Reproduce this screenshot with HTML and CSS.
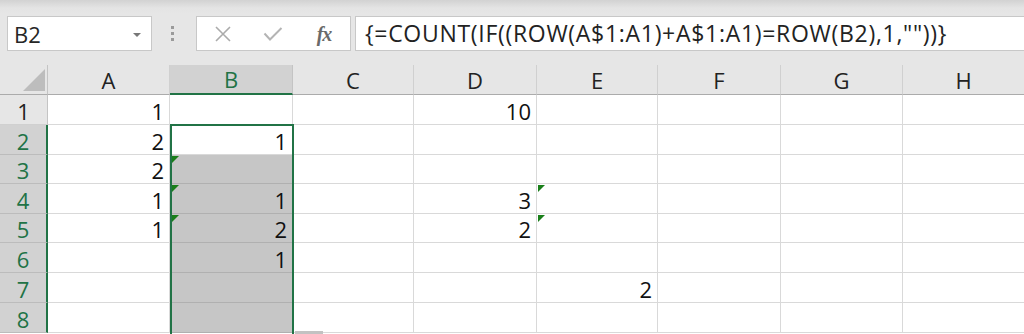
FILE: index.html
```html
<!DOCTYPE html>
<html>
<head>
<meta charset="utf-8">
<link rel="stylesheet" href="styles.css">
</head>
<body>
<div class="app">
  <div class="fbar">
    <div class="namebox"><span class="nb-text">B2</span><span class="nb-arrow"></span></div>
    <div class="grip"><i></i><i></i><i></i></div>
    <div class="tools">
      <span class="tool"><svg width="18" height="16" viewBox="0 0 18 16"><path d="M2 1 L16 15 M16 1 L2 15" stroke="#ababab" stroke-width="1.6" fill="none"/></svg></span>
      <span class="tool"><svg width="20" height="14" viewBox="0 0 20 14"><path d="M1.5 6.5 L7 12.5 L18.5 1" stroke="#b4b4b4" stroke-width="2" fill="none"/></svg></span>
      <span class="tool fx">fx</span>
    </div>
    <div class="finput">{=COUNT(IF((ROW(A$1:A1)+A$1:A1)=ROW(B2),1,""))}</div>
  </div>

  <div class="sheet">
    <div class="grid">
      <div class="corner"><span class="corner-tri"></span></div>
      <div class="ch">A</div>
      <div class="ch sel">B</div>
      <div class="ch">C</div>
      <div class="ch">D</div>
      <div class="ch">E</div>
      <div class="ch">F</div>
      <div class="ch">G</div>
      <div class="ch">H</div>

      <div class="rh">1</div>
      <div class="c">1</div><div class="c"></div><div class="c"></div><div class="c">10</div><div class="c"></div><div class="c"></div><div class="c"></div><div class="c"></div>

      <div class="rh sel">2</div>
      <div class="c">2</div><div class="c active">1</div><div class="c"></div><div class="c"></div><div class="c"></div><div class="c"></div><div class="c"></div><div class="c"></div>

      <div class="rh sel">3</div>
      <div class="c">2</div><div class="c hl"><span class="err"></span></div><div class="c"></div><div class="c"></div><div class="c"></div><div class="c"></div><div class="c"></div><div class="c"></div>

      <div class="rh sel">4</div>
      <div class="c">1</div><div class="c hl"><span class="err"></span>1</div><div class="c"></div><div class="c">3</div><div class="c"><span class="err"></span></div><div class="c"></div><div class="c"></div><div class="c"></div>

      <div class="rh sel">5</div>
      <div class="c">1</div><div class="c hl"><span class="err"></span>2</div><div class="c"></div><div class="c">2</div><div class="c"><span class="err"></span></div><div class="c"></div><div class="c"></div><div class="c"></div>

      <div class="rh sel">6</div>
      <div class="c"></div><div class="c hl">1</div><div class="c"></div><div class="c"></div><div class="c"></div><div class="c"></div><div class="c"></div><div class="c"></div>

      <div class="rh sel">7</div>
      <div class="c"></div><div class="c hl"></div><div class="c"></div><div class="c"></div><div class="c">2</div><div class="c"></div><div class="c"></div><div class="c"></div>

      <div class="rh sel">8</div>
      <div class="c"></div><div class="c hl"></div><div class="c"></div><div class="c"></div><div class="c"></div><div class="c"></div><div class="c"></div><div class="c"></div>
    </div>
    <div class="selection"></div>
    <div class="hscroll"></div>
  </div>
</div>
</body>
</html>
```

FILE: styles.css
```css
html, body {
  margin: 0;
  padding: 0;
  background: #ffffff;
}
body {
  font-family: "Open Sans", "Liberation Sans", sans-serif;
  color: #222222;
  overflow: hidden;
}
.app {
  width: 1024px;
  height: 334px;
  overflow: hidden;
}

/* formula bar */
.fbar {
  height: 65px;
  box-sizing: border-box;
  padding: 16px 0 0 7px;
  display: flex;
  align-items: flex-start;
  background: linear-gradient(#d2d2d2 0px, #e4e4e4 8px, #e6e6e6 14px);
}
.namebox {
  width: 145px;
  height: 35px;
  box-sizing: border-box;
  background: #ffffff;
  border: 1px solid #c8c8c8;
  display: flex;
  align-items: center;
  justify-content: space-between;
  padding: 0 10px 0 6px;
}
.nb-text {
  font-size: 22px;
  line-height: 1;
  color: #262626;
}
.nb-arrow {
  width: 0;
  height: 0;
  border-left: 4px solid transparent;
  border-right: 4px solid transparent;
  border-top: 4px solid #777777;
  margin-top: 2px;
}
.grip {
  width: 4px;
  margin: 10px 22px 0 18px;
  display: flex;
  flex-direction: column;
  align-items: center;
  gap: 3px;
}
.grip i {
  width: 3px;
  height: 3px;
  background: #9a9a9a;
  display: block;
}
.tools {
  width: 155px;
  height: 35px;
  box-sizing: border-box;
  background: #ffffff;
  border: 1px solid #c8c8c8;
  display: grid;
  grid-template-columns: 51px 50px 52px;
  align-items: center;
  justify-items: center;
}
.tool {
  display: flex;
  align-items: center;
  justify-content: center;
}
.fx {
  font-family: "Liberation Serif", "DejaVu Serif", serif;
  font-style: italic;
  font-weight: bold;
  font-size: 20px;
  color: #6a6a6a;
  letter-spacing: -1px;
  line-height: 1;
}
.finput {
  flex: 1;
  margin-left: 4px;
  height: 35px;
  box-sizing: border-box;
  background: #ffffff;
  border: 1px solid #c8c8c8;
  border-right: none;
  font-size: 23px;
  letter-spacing: 0.7px;
  line-height: 33px;
  padding-left: 9px;
  white-space: nowrap;
  color: #222222;
}

/* sheet */
.sheet {
  position: relative;
  height: 269px;
  overflow: hidden;
}
.grid {
  display: grid;
  grid-template-columns: 48px 122px 123px 121px 123px 121px 123px 122px 122px;
  grid-template-rows: 30px 30px 30px 29px 30px 29px 30px 30px 30px;
}
.corner, .ch, .rh {
  background: #e6e6e6;
  box-sizing: border-box;
}
.corner {
  position: relative;
  border-right: 1px solid #c4c4c4;
  border-bottom: 1px solid #ababab;
}
.corner-tri {
  position: absolute;
  right: 2px;
  bottom: 3px;
  width: 0;
  height: 0;
  border-left: 22px solid transparent;
  border-bottom: 22px solid #bdbdbd;
}
.ch {
  border-right: 1px solid #d0d0d0;
  border-bottom: 1px solid #ababab;
  display: flex;
  align-items: center;
  justify-content: center;
  font-size: 22px;
  line-height: 1;
  color: #222222;
}
.ch.sel {
  background: #d2d2d2;
  color: #217346;
  border-bottom: 2px solid #217346;
  border-right-color: #c4c4c4;
}
.rh {
  border-right: 1px solid #c4c4c4;
  border-bottom: 1px solid #d0d0d0;
  display: flex;
  align-items: center;
  justify-content: center;
  font-size: 22px;
  line-height: 1;
  color: #222222;
  padding-top: 2px;
}
.rh.sel {
  background: #d2d2d2;
  color: #217346;
  border-right: 2px solid #217346;
  border-bottom-color: #bcbcbc;
}
.c {
  position: relative;
  box-sizing: border-box;
  border-right: 1px solid #d9d9d9;
  border-bottom: 1px solid #d9d9d9;
  display: flex;
  align-items: center;
  justify-content: flex-end;
  padding: 2px 5px 0 0;
  font-size: 22px;
  line-height: 1;
  color: #111111;
}
.c.hl {
  background: #c6c6c6;
  border-bottom-color: #b0b0b0;
  border-right-color: #c6c6c6;
}
.err {
  position: absolute;
  left: 1px;
  top: 1px;
  width: 0;
  height: 0;
  border-top: 7px solid #1a7f1a;
  border-right: 7px solid transparent;
}
.c.hl .err {
  left: 2px;
}
.selection {
  position: absolute;
  left: 170px;
  top: 59px;
  width: 124px;
  height: 230px;
  box-sizing: border-box;
  border: 2px solid #217346;
  pointer-events: none;
}
.hscroll {
  position: absolute;
  left: 295px;
  top: 266px;
  width: 28px;
  height: 4px;
  background: #c2c2c2;
}
```
